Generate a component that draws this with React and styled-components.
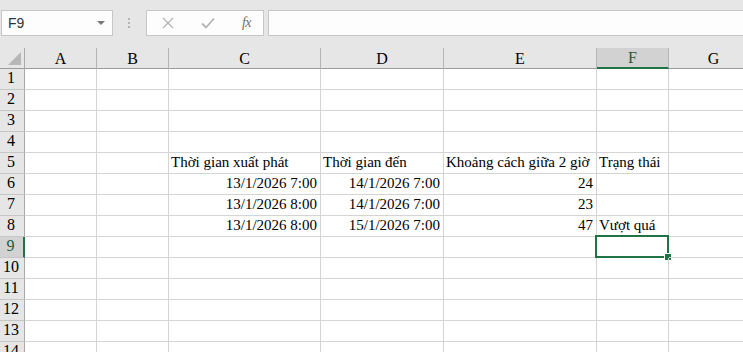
import React from 'react';
import styled, { createGlobalStyle } from 'styled-components';

const GlobalStyle = createGlobalStyle`
  html, body {
    margin: 0;
    padding: 0;
    background: #e6e6e6;
    overflow: hidden;
  }
`;

const COLS = [
  { name: 'A', width: 72 },
  { name: 'B', width: 72 },
  { name: 'C', width: 152 },
  { name: 'D', width: 123 },
  { name: 'E', width: 153 },
  { name: 'F', width: 72 },
  { name: 'G', width: 90 },
];

const DATA = {
  5: { C: 'Thời gian xuất phát', D: 'Thời gian đến', E: 'Khoảng cách giữa 2 giờ', F: 'Trạng thái' },
  6: { C: '13/1/2026 7:00', D: '14/1/2026 7:00', E: '24' },
  7: { C: '13/1/2026 8:00', D: '14/1/2026 7:00', E: '23' },
  8: { C: '13/1/2026 8:00', D: '15/1/2026 7:00', E: '47', F: 'Vượt quá' },
};

const NUMERIC_COLS = ['C', 'D', 'E'];
const ACTIVE = { col: 'F', row: 9 };

const Page = styled.div`
  width: 743px;
  height: 352px;
  background: #e6e6e6;
  font-family: 'Liberation Serif', 'Times New Roman', serif;
  overflow: hidden;
`;

const FormulaBar = styled.div`
  display: flex;
  align-items: center;
  height: 48px;
  padding: 10px 0 12px 1px;
  box-sizing: border-box;
`;

const NameBox = styled.div`
  display: flex;
  align-items: center;
  justify-content: space-between;
  width: 112px;
  height: 26px;
  box-sizing: border-box;
  background: #fdfdfd;
  border: 1px solid #c6c6c6;
  padding: 0 7px 0 6px;
  font-family: 'Liberation Sans', Arial, sans-serif;
  font-size: 14px;
  color: #333;
`;

const Caret = styled.span`
  width: 0;
  height: 0;
  border-left: 4px solid transparent;
  border-right: 4px solid transparent;
  border-top: 4px solid #777;
`;

const Grip = styled.div`
  display: flex;
  flex-direction: column;
  gap: 2px;
  margin: 0 16px 0 15px;
  span {
    width: 2px;
    height: 2px;
    background: #b4b4b4;
  }
`;

const FuncBox = styled.div`
  display: flex;
  align-items: center;
  justify-content: space-between;
  width: 118px;
  height: 26px;
  box-sizing: border-box;
  background: #fdfdfd;
  border: 1px solid #c6c6c6;
  padding: 0 12px 0 15px;
`;

const FxLabel = styled.span`
  font-family: 'Liberation Serif', 'Times New Roman', serif;
  font-style: italic;
  font-size: 14px;
  color: #6f6f6f;
  letter-spacing: -0.5px;
`;

const FormulaInput = styled.div`
  flex: 1;
  height: 26px;
  margin-left: 4px;
  box-sizing: border-box;
  background: #fdfdfd;
  border: 1px solid #c6c6c6;
  border-right: none;
`;

const Sheet = styled.div`
  display: grid;
  grid-template-columns: 25px ${COLS.map((c) => `${c.width}px`).join(' ')};
  grid-auto-rows: 21px;
  background: #fff;
  font-size: 15px;
  color: #000;
`;

const Corner = styled.div`
  position: relative;
  height: 21px;
  background: #e6e6e6;
  border-right: 1px solid #a9a9a9;
  border-bottom: 1px solid #9b9b9b;
  box-sizing: border-box;
  &::after {
    content: '';
    position: absolute;
    right: 3px;
    bottom: 3px;
    width: 0;
    height: 0;
    border-left: 13px solid transparent;
    border-bottom: 13px solid #b7b7b7;
  }
`;

const ColHeader = styled.div`
  height: 21px;
  box-sizing: border-box;
  display: flex;
  align-items: center;
  justify-content: center;
  background: ${(p) => (p.active ? '#d2d2d2' : '#e6e6e6')};
  color: ${(p) => (p.active ? '#1e5b3c' : '#000')};
  border-right: 1px solid #b5b5b5;
  border-bottom: ${(p) => (p.active ? '2px solid #217346' : '1px solid #9b9b9b')};
  padding-top: 1px;
  line-height: 18px;
  font-size: 16px;
`;

const RowHeader = styled.div`
  box-sizing: border-box;
  display: flex;
  align-items: flex-end;
  justify-content: center;
  padding-bottom: 2px;
  padding-right: 2px;
  background: ${(p) => (p.active ? '#d2d2d2' : '#e6e6e6')};
  color: ${(p) => (p.active ? '#1e5b3c' : '#000')};
  border-right: ${(p) => (p.active ? '2px solid #217346' : '1px solid #a9a9a9')};
  border-bottom: 1px solid #c6c6c6;
  line-height: 18px;
  font-size: 16px;
`;

const Cell = styled.div`
  position: relative;
  box-sizing: border-box;
  display: flex;
  align-items: flex-end;
  justify-content: ${(p) => (p.numeric ? 'flex-end' : 'flex-start')};
  padding: 0 3px 2px 2px;
  border-right: 1px solid #d4d4d4;
  border-bottom: 1px solid #d4d4d4;
  white-space: nowrap;
  line-height: 18px;
`;

const Selection = styled.div`
  position: absolute;
  left: -2px;
  top: -2px;
  right: -1px;
  bottom: -1px;
  border: 2px solid #217346;
  pointer-events: none;
  &::after {
    content: '';
    position: absolute;
    right: -5px;
    bottom: -5px;
    width: 6px;
    height: 6px;
    background: #217346;
    border: 1px solid #fff;
  }
`;

const CrossIcon = () => (
  <svg width="12" height="12" viewBox="0 0 12 12">
    <path d="M1 1 L11 11 M11 1 L1 11" stroke="#b4b4b4" strokeWidth="1.3" fill="none" />
  </svg>
);

const CheckIcon = () => (
  <svg width="14" height="12" viewBox="0 0 14 12">
    <path d="M1 6.5 L5 10.5 L13 1.5" stroke="#b4b4b4" strokeWidth="1.8" fill="none" />
  </svg>
);

const App = () => {
  const rows = Array.from({ length: 14 }, (_, i) => i + 1);

  return (
    <Page>
      <GlobalStyle />
      <FormulaBar>
        <NameBox>
          <span>F9</span>
          <Caret />
        </NameBox>
        <Grip>
          <span />
          <span />
          <span />
        </Grip>
        <FuncBox>
          <CrossIcon />
          <CheckIcon />
          <FxLabel>fx</FxLabel>
        </FuncBox>
        <FormulaInput />
      </FormulaBar>

      <Sheet>
        <Corner />
        {COLS.map((c) => (
          <ColHeader key={c.name} active={c.name === ACTIVE.col}>
            {c.name}
          </ColHeader>
        ))}
        {rows.map((r) => (
          <React.Fragment key={r}>
            <RowHeader active={r === ACTIVE.row}>{r}</RowHeader>
            {COLS.map((c) => {
              const value = DATA[r] && DATA[r][c.name];
              const numeric = r > 5 && NUMERIC_COLS.includes(c.name);
              return (
                <Cell key={c.name} numeric={numeric}>
                  {value}
                  {r === ACTIVE.row && c.name === ACTIVE.col && <Selection />}
                </Cell>
              );
            })}
          </React.Fragment>
        ))}
      </Sheet>
    </Page>
  );
};

export default App;
